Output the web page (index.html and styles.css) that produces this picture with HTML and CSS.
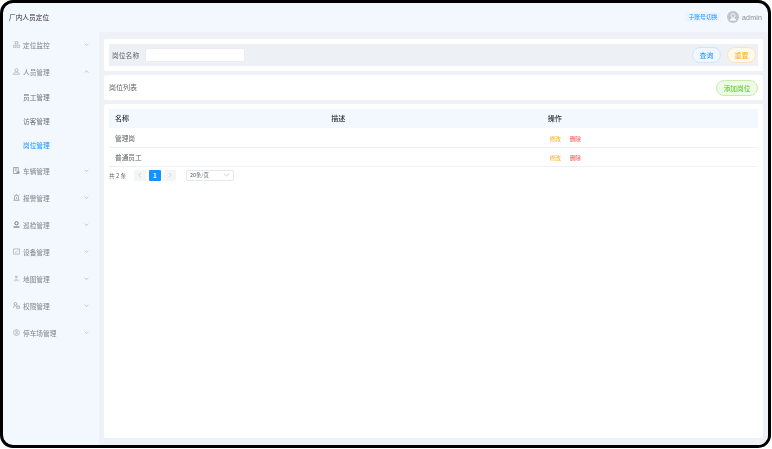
FILE: index.html
```html
<!DOCTYPE html>
<html lang="zh-CN">
<head>
<meta charset="utf-8">
<title>厂内人员定位</title>
<link rel="stylesheet" href="styles.css">
</head>
<body>
<div class="frame">
  <header class="topbar">
    <div class="title">厂内人员定位</div>
    <div class="user">
      <span class="switch">子账号切换</span>
      <svg class="avatar" viewBox="0 0 12 12"><circle cx="6" cy="6" r="6" fill="#c0c4cc"/><circle cx="6" cy="4.600" r="2" fill="none" stroke="#fff" stroke-width=".8"/><path d="M2.600 9.400c.5-1.500 1.800-2.100 3.400-2.100s2.900.6 3.400 2.100z" fill="#fff"/></svg>
      <span class="name">admin</span>
    </div>
  </header>
  <div class="body">
    <nav class="side">
      <div class="item"><svg class="ico" viewBox="0 0 8 8"><path d="M2.500.7h3v2.600h-3zM.5 4.800h2.800v2.500H.5zM4.700 4.800h2.800v2.500H4.700z" fill="none" stroke="#8d9299" stroke-width=".6"/></svg><span class="lbl">定位监控</span><svg class="chev" viewBox="0 0 6 4"><path d="M.8.8 3 3 5.200.8" fill="none" stroke="#8d9299" stroke-width=".6"/></svg></div>
      <div class="item"><svg class="ico" viewBox="0 0 8 8"><circle cx="4" cy="2.500" r="1.800" fill="none" stroke="#8d9299" stroke-width=".6"/><path d="M.5 7.200c.3-1.700 1.600-2.500 3.500-2.500s3.200.8 3.500 2.500z" fill="none" stroke="#8d9299" stroke-width=".6"/></svg><span class="lbl">人员管理</span><svg class="chev" viewBox="0 0 6 4"><path d="M.8 3 3 .8 5.200 3" fill="none" stroke="#8d9299" stroke-width=".6"/></svg></div>
      <div class="sub">员工管理</div>
      <div class="sub">访客管理</div>
      <div class="sub active">岗位管理</div>
      <div class="item"><svg class="ico" viewBox="0 0 8 8"><path d="M.5.600h5.500v6.800H.5zM2 2.200h2.500M2 3.800h2" fill="none" stroke="#777" stroke-width=".7"/><path d="M4 5h3.500v2.500H4z" fill="#999"/></svg><span class="lbl">车辆管理</span><svg class="chev" viewBox="0 0 6 4"><path d="M.8.8 3 3 5.200.8" fill="none" stroke="#8d9299" stroke-width=".6"/></svg></div>
      <div class="item"><svg class="ico" viewBox="0 0 8 8"><path d="M1.800 6.800V3.500a2.200 2.200 0 0 1 4.400 0v3.300M.5 7.200h7M4 0v.8M.8 1l.7.6M7.200 1l-.7.6M4 3.500v2" fill="none" stroke="#777" stroke-width=".7"/></svg><span class="lbl">报警管理</span><svg class="chev" viewBox="0 0 6 4"><path d="M.8.8 3 3 5.200.8" fill="none" stroke="#8d9299" stroke-width=".6"/></svg></div>
      <div class="item"><svg class="ico" viewBox="0 0 8 8"><circle cx="4" cy="2.600" r="1.900" fill="none" stroke="#555" stroke-width=".9"/><path d="M.6 6.900h6.800" stroke="#555" stroke-width="1.100"/></svg><span class="lbl">巡检管理</span><svg class="chev" viewBox="0 0 6 4"><path d="M.8.8 3 3 5.200.8" fill="none" stroke="#8d9299" stroke-width=".6"/></svg></div>
      <div class="item"><svg class="ico" viewBox="0 0 8 8"><path d="M.5 1h7v6h-7zM2.200 4.300l1.200 1 2.200-2.300" fill="none" stroke="#8d9299" stroke-width=".6"/></svg><span class="lbl">设备管理</span><svg class="chev" viewBox="0 0 6 4"><path d="M.8.8 3 3 5.200.8" fill="none" stroke="#8d9299" stroke-width=".6"/></svg></div>
      <div class="item"><svg class="ico" viewBox="0 0 8 8"><circle cx="3.800" cy="2.300" r="1.700" fill="#c4c7cc"/><path d="M.5 7.200 2.300 4.600h3L7.500 7.200z" fill="#d4d6da"/></svg><span class="lbl">地图管理</span><svg class="chev" viewBox="0 0 6 4"><path d="M.8.8 3 3 5.200.8" fill="none" stroke="#8d9299" stroke-width=".6"/></svg></div>
      <div class="item"><svg class="ico" viewBox="0 0 8 8"><circle cx="2.800" cy="2.200" r="1.600" fill="none" stroke="#777" stroke-width=".6"/><path d="M.4 6.800c0-1.600 1-2.500 2.400-2.500" fill="none" stroke="#777" stroke-width=".6"/><path d="M4.300 4.500h3v2.700h-3z" fill="none" stroke="#777" stroke-width=".6"/></svg><span class="lbl">权限管理</span><svg class="chev" viewBox="0 0 6 4"><path d="M.8.8 3 3 5.200.8" fill="none" stroke="#8d9299" stroke-width=".6"/></svg></div>
      <div class="item"><svg class="ico" viewBox="0 0 8 8"><circle cx="4" cy="4" r="3.400" fill="none" stroke="#8d9299" stroke-width=".6"/><circle cx="4" cy="3.200" r="1" fill="none" stroke="#8d9299" stroke-width=".6"/><path d="M2.300 6c.3-.9 3.100-.9 3.400 0" fill="none" stroke="#8d9299" stroke-width=".6"/></svg><span class="lbl">停车场管理</span><svg class="chev" viewBox="0 0 6 4"><path d="M.8.8 3 3 5.200.8" fill="none" stroke="#8d9299" stroke-width=".6"/></svg></div>
    </nav>
    <main class="content">
      <section class="card search">
        <div class="searchbar">
          <span class="field-label">岗位名称</span>
          <span class="input"></span>
          <span class="btn query">查询</span>
          <span class="btn reset">重置</span>
        </div>
      </section>
      <section class="card listhead">
        <span class="listtitle">岗位列表</span>
        <span class="btn add">添加岗位</span>
      </section>
      <section class="card tablecard">
        <table class="grid">
          <thead>
            <tr><th>名称</th><th>描述</th><th>操作</th></tr>
          </thead>
          <tbody>
            <tr><td>管理岗</td><td></td><td><span class="edit">修改</span><span class="del">删除</span></td></tr>
            <tr><td>普通员工</td><td></td><td><span class="edit">修改</span><span class="del">删除</span></td></tr>
          </tbody>
        </table>
        <div class="pager">
          <span class="total">共 2 条</span>
          <span class="pg"><svg class="pgarrow" viewBox="0 0 4 6"><path d="M3 .8.8 3 3 5.200" fill="none" stroke="#b4b8bf" stroke-width=".6"/></svg></span>
          <span class="pg current">1</span>
          <span class="pg"><svg class="pgarrow" viewBox="0 0 4 6"><path d="M1 .8 3.200 3 1 5.200" fill="none" stroke="#b4b8bf" stroke-width=".6"/></svg></span>
          <span class="size">20条/页<svg class="sizechev" viewBox="0 0 8 4"><path d="M.8.500 4 3.500 7.200.500" fill="none" stroke="#a8abb2" stroke-width=".6"/></svg></span>
        </div>
      </section>
    </main>
  </div>
</div>
</body>
</html>
```
FILE: styles.css
```css
* { box-sizing: border-box; }
html, body { margin: 0; padding: 0; background: #fff; }
body { width: 772px; height: 449px; overflow: hidden; font-family: "Noto Sans CJK SC", "Noto Sans", sans-serif; font-size: 6.700px; color: #606266; }
.frame { width: 771px; height: 448px; border: 3px solid #000; border-radius: 13px; overflow: hidden; background: #f3f7fe; display: flex; flex-direction: column; }
.topbar, .side, .card > * { filter: blur(.3px); }
.topbar { height: 29px; flex: none; display: flex; align-items: center; justify-content: space-between; padding: 0 6px; }
.title { color: #303133; line-height: 12px; margin-bottom: 2px; }
.user { display: flex; align-items: center; margin-bottom: 1px; }
.switch { width: 36px; height: 10px; line-height: 10px; text-align: center; font-size: 5.800px; color: #1890ff; background: #ecf5ff; margin-right: 6px; }
.avatar { width: 12px; height: 12px; margin-right: 3px; }
.name { width: 20px; font-size: 7px; letter-spacing: .2px; color: #8a8d92; font-family: "Liberation Sans", sans-serif; }
.body { flex: 1; display: flex; min-height: 0; }
.side { width: 96px; flex: none; }
.item { height: 27px; display: flex; align-items: center; padding-left: 10px; color: #80848b; }
.item:first-child { margin-top: -1px; }
.ico { width: 7px; height: 7px; margin-right: 3px; flex: none; }
.lbl { width: 61px; line-height: 10px; white-space: nowrap; }
.chev { width: 5px; height: 3.500px; flex: none; }
.sub { height: 24px; line-height: 25px; padding-left: 20px; color: #6e7278; }
.sub.active { color: #1890ff; }
.content { flex: 1; background: #eef2f6; padding: 7px 5px 7px; display: flex; flex-direction: column; gap: 4px; min-width: 0; }
.card { background: #fff; border-radius: 2px; padding: 5px; }
.search { height: 32px; flex: none; }
.searchbar { height: 22px; background: #edf1f5; display: flex; align-items: center; padding: 0 2px 0 3px; }
.field-label { width: 33px; color: #606266; font-size: 6.800px; }
.input { width: 100px; height: 14px; background: #fff; border: 1px solid #e9ecf1; border-radius: 2px; margin-right: auto; }
.btn { display: inline-block; height: 16px; line-height: 14px; text-align: center; border-radius: 8px; border: 1px solid; font-size: 7px; }
.query { width: 29px; color: #1890ff; background: #f0f7ff; border-color: #cfe5fd; margin-right: 6px; }
.reset { width: 29px; color: #faad14; background: #fff8ec; border-color: #fde3bd; }
.listhead { height: 25px; flex: none; display: flex; align-items: center; justify-content: space-between; padding: 0 5px; }
.listtitle { color: #606266; font-size: 7px; margin-bottom: 1px; }
.add { width: 42px; color: #52c41a; background: #eefbe6; border-color: #c6ecaa; font-size: 6.700px; }
.tablecard { flex: 1; min-height: 0; }
.grid { width: 649px; border-collapse: collapse; table-layout: fixed; }
.grid th { height: 19px; padding: 0 6px 2px; text-align: left; font-weight: 500; font-size: 7px; color: #303133; background: #f3f7fe; }
.grid td { height: 19px; padding: 1px 6px 0; color: #606266; border-bottom: 1px solid #eef0f4; }
.grid tbody tr + tr td { padding-top: 0; }
.edit { color: #faad14; font-size: 5.700px; margin-left: 2px; margin-right: 8.600px; }
.del { color: #ff4d4f; font-size: 5.700px; }
.pager { display: flex; align-items: center; height: 11px; margin-top: 3px; font-size: 5.700px; }
.total { width: 25px; }
.pg { width: 12px; height: 11px; background: #f4f5f7; border-radius: 1px; margin-right: 3px; display: flex; align-items: center; justify-content: center; color: #c0c4cc; }
.current { background: #1890ff; color: #fff; font-size: 6.500px; font-weight: 700; }
.pgarrow { width: 4px; height: 6px; }
.size { width: 48px; height: 11px; margin-left: 7px; border: 1px solid #e4e7ec; border-radius: 2px; padding: 0 3px; display: flex; align-items: center; justify-content: space-between; color: #606266; font-size: 5.400px; }
.sizechev { width: 7px; height: 3.500px; }
```
